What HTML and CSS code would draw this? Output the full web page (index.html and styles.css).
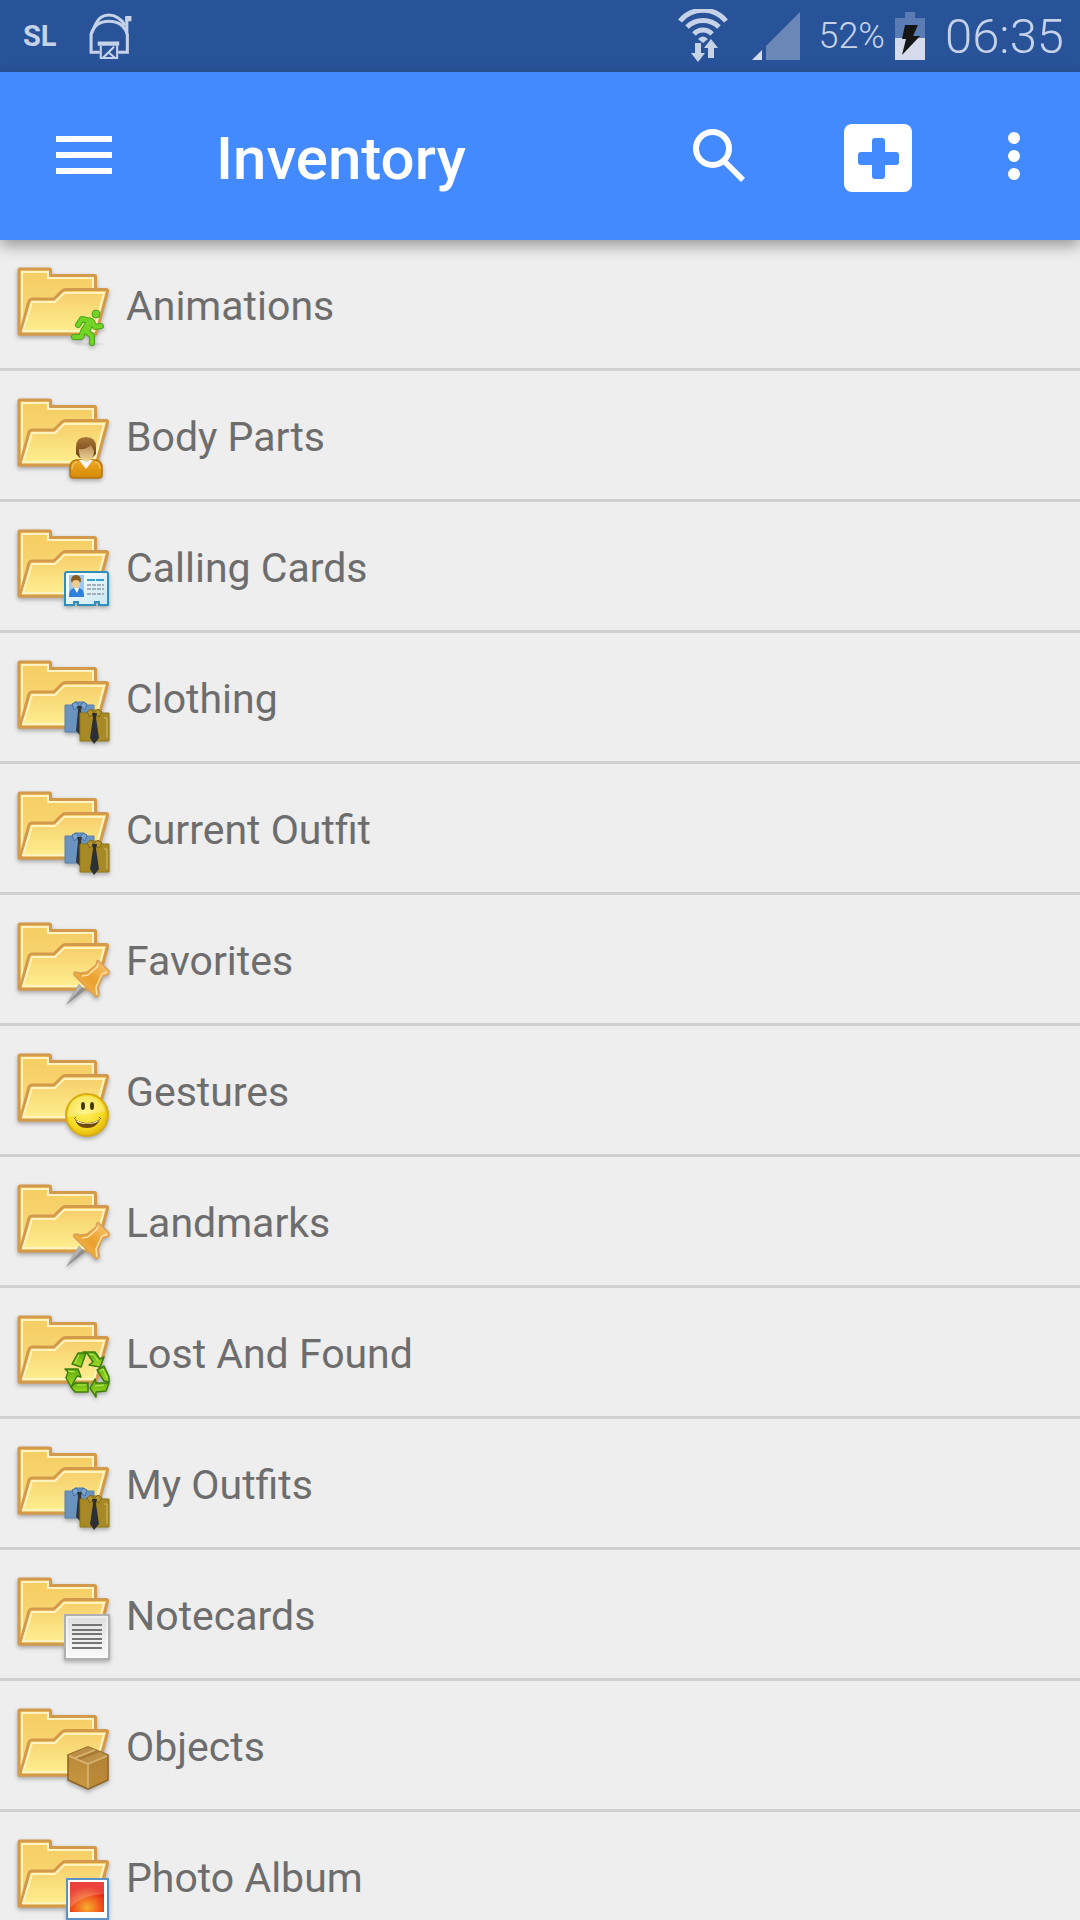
FILE: index.html
```
<!DOCTYPE html>
<html lang="en">
<head>
    <meta charset="UTF-8">
    <meta name="viewport" content="width=device-width, initial-scale=1.0">
    <title>Inventory</title>
    <link rel="stylesheet" href="styles.css">
</head>
<body>

    <!-- Shared icon shapes -->
    <svg class="sprite" aria-hidden="true">
        <defs>
            <linearGradient id="gBack" x1="0" y1="0" x2="0" y2="1">
                <stop offset="0" stop-color="#f5cd62"/><stop offset="1" stop-color="#fbdc7c"/>
            </linearGradient>
            <linearGradient id="gFront" x1="0" y1="0" x2="0" y2="1">
                <stop offset="0" stop-color="#f6cd68"/><stop offset="1" stop-color="#fff092"/>
            </linearGradient>
            <linearGradient id="gOrange" x1="0" y1="0" x2="0" y2="1">
                <stop offset="0" stop-color="#f0a822"/><stop offset="1" stop-color="#d38a08"/>
            </linearGradient>
            <linearGradient id="gHair" x1="0" y1="0" x2="0" y2="1">
                <stop offset="0" stop-color="#a87838"/><stop offset="1" stop-color="#6b3d12"/>
            </linearGradient>
            <linearGradient id="gFace" x1="0" y1="0" x2="0" y2="1">
                <stop offset="0" stop-color="#b98d55"/><stop offset="1" stop-color="#f2d9a0"/>
            </linearGradient>
            <linearGradient id="gCard" x1="0" y1="0" x2="1" y2="1">
                <stop offset="0" stop-color="#ffffff"/><stop offset="1" stop-color="#c8e8f4"/>
            </linearGradient>
            <linearGradient id="gPin" x1="0" y1="1" x2="1" y2="0">
                <stop offset="0" stop-color="#f8c25e"/><stop offset="0.5" stop-color="#e9a02c"/><stop offset="1" stop-color="#fbc873"/>
            </linearGradient>
            <linearGradient id="gGreen" x1="0" y1="0" x2="0" y2="1">
                <stop offset="0" stop-color="#5fae10"/><stop offset="1" stop-color="#a0dc22"/>
            </linearGradient>
            <linearGradient id="gPaper" x1="0" y1="0" x2="0" y2="1">
                <stop offset="0" stop-color="#dedede"/><stop offset="1" stop-color="#fafafa"/>
            </linearGradient>
            <linearGradient id="gBox" x1="0" y1="0" x2="0" y2="1">
                <stop offset="0" stop-color="#b98538"/><stop offset="1" stop-color="#c8993f"/>
            </linearGradient>
            <radialGradient id="gSmile" cx="0.45" cy="0.4" r="0.6">
                <stop offset="0" stop-color="#fff36b"/><stop offset="0.7" stop-color="#f6da22"/><stop offset="1" stop-color="#e3b60d"/>
            </radialGradient>
            <radialGradient id="gPhoto" cx="0.5" cy="0.85" r="0.7">
                <stop offset="0" stop-color="#f8b030"/><stop offset="0.6" stop-color="#f0501c"/><stop offset="1" stop-color="#e5140c"/>
            </radialGradient>
        </defs>

        <symbol id="folder" viewBox="0 0 96 96">
            <path d="M4 78V14q0-1 1-1h29.500q1 0 1 1v5.500h44q1 0 1 1V40L76 78z" fill="url(#gBack)" stroke="#d39a4c" stroke-width="3" stroke-linejoin="round"/>
            <path d="M7 74V16h26v6h45v10" fill="none" stroke="#fff3c4" stroke-width="2"/>
            <path d="M5 78L14 45q1-2 3-2h22l8-8q1.500-1.500 4-1.500h40q2 0 1.500 2L81 78z" fill="url(#gFront)" stroke="#d39a4c" stroke-width="3" stroke-linejoin="round"/>
            <path d="M8 75L17 46h23l9-9h40L79 75z" fill="none" stroke="#fff3c0" stroke-width="2"/>
        </symbol>

        <symbol id="runner" viewBox="0 0 96 96">
            <ellipse cx="74" cy="88" rx="14" ry="2" fill="#000" opacity="0.06"/>
            <g fill="none" stroke-linecap="round" stroke-linejoin="round">
                <g stroke="#46a51c" stroke-width="6">
                    <path d="M75 65l-8-2-4 6M77 66l3 5 6-1M70 74l7 6v7M69 73l-3 8h-7"/>
                    <path d="M75 66l-4 8" stroke-width="9"/>
                </g>
                <g stroke="#74d425" stroke-width="4">
                    <path d="M75 65l-8-2-4 6M77 66l3 5 6-1M70 74l7 6v7M69 73l-3 8h-7"/>
                    <path d="M75 66l-4 8" stroke-width="7"/>
                </g>
            </g>
            <circle cx="81" cy="58" r="4" fill="#74d425" stroke="#46a51c"/>
        </symbol>

        <symbol id="person" viewBox="0 0 96 96">
            <path d="M55 81q0-7 6-8h20q6 1 6 8v7q0 3-4 3H59q-4 0-4-3z" fill="url(#gOrange)" stroke="#b97408" stroke-width="1.500"/>
            <path d="M57 82q0-6 5-7M85 82q0-6-5-7" fill="none" stroke="#fad27c"/>
            <path d="M64 73h14l-7 9z" fill="#f7f7f7"/>
            <path d="M61 67V60q0-10 10-10t10 10v7l-4 4H65z" fill="url(#gHair)"/>
            <path d="M64 62q7 1 12-4l3 6q0 9-8 11-7-2-7-11z" fill="url(#gFace)"/>
        </symbol>

        <symbol id="card" viewBox="0 0 96 96">
            <path d="M50 56q0-2 2-2h39q2 0 2 2v31h-9v-3h-4v3H63v-3h-4v3h-9z" fill="url(#gCard)" stroke="#2f8fb8" stroke-width="2"/>
            <path d="M54 57h15v22H54z" fill="#9cc9f2"/>
            <path d="M54 78q0-7 5-8h5q5 1 5 8v1H54z" fill="#2f7fdd"/>
            <path d="M59 70h5l-2 5z" fill="#fff"/>
            <circle cx="61" cy="62" r="5" fill="#8a5a20"/>
            <circle cx="61" cy="66" r="4" fill="#eccb91"/>
            <path d="M72 62h17" stroke="#35a0c8" stroke-width="2" stroke-dasharray="8 1"/>
            <path d="M72 67h17M72 71h17M72 76h17" stroke="#8f9ba2" stroke-width="1.500" stroke-dasharray="4 1"/>
        </symbol>

        <symbol id="shirts" viewBox="0 0 96 96">
            <path d="M50 56h7l3-3h9l3 3h7v27H50z" fill="#6a93c0" stroke="#5680ad"/>
            <path d="M57 55l4-2 3 4-5 4zM72 55l-4-2-3 4 5 4z" fill="#7ba3d0" stroke="#47719f"/>
            <path d="M62 57h5l-1 4 3 21-4 4-4-4 2-21z" fill="#30353c"/>
            <path d="M65 64h7l3-3h9l3 3h7v28H65z" fill="#a78a25" stroke="#8e7620"/>
            <path d="M72 63l4-3 3 4-4 4zM87 63l-4-3-4 4 5 4z" fill="#b7962c" stroke="#7e6816"/>
            <path d="M89 69h3v20" fill="none" stroke="#d3bd6c"/>
            <path d="M77 64h5l-1 5 3 20-5 6-4-6 3-20z" fill="#2c2f33"/>
        </symbol>

        <symbol id="pin" viewBox="0 0 96 96">
            <path d="M64 73l6 6-19 15z" fill="#8e8e8e"/>
            <path d="M64 73l3 3-16 18z" fill="#b4b4b4"/>
            <path d="M82 50q1-1 2 0l10 10q1 3-2 4l-4 1-5 11q1 5 1 8-1 2-3 2L59 64q-1-3 2-3l4 1 7-1 9-7z" fill="url(#gPin)" stroke="#d9a05c" stroke-width="1.500" stroke-linejoin="round"/>
            <path d="M83 53l-1 3-9 8-6 1M92 61l-5 2-6 13 1 8" fill="none" stroke="#ffe0a5" stroke-width="1.500"/>
        </symbol>

        <symbol id="smile" viewBox="0 0 96 96">
            <circle cx="72" cy="73" r="21" fill="url(#gSmile)" stroke="#d6ac14" stroke-width="2"/>
            <path d="M53 75q-1-20 19-21 15 1 18 16-18 1-37 5z" fill="#fff" opacity="0.25"/>
            <ellipse cx="68" cy="64" rx="2" ry="4" fill="#45360a"/>
            <ellipse cx="77" cy="64" rx="2" ry="4" fill="#45360a"/>
            <path d="M60 77q12 8 25 0-3 9-13 9t-12-9z" fill="#6f4a0c"/>
            <path d="M61 78q11 7 23 0-2 4-12 4t-11-4z" fill="#fffbe0"/>
            <path d="M59 77l2-2M84 75l2 2" stroke="#8a6408"/>
        </symbol>

        <symbol id="recycle" viewBox="0 0 96 96">
            <g fill="url(#gGreen)" stroke="#3d7d0b" stroke-width="1.500" stroke-linejoin="round">
                <path d="M63 49h8l-5 14-9-3z"/>
                <path d="M68 48h12l5 7 4-2-4 10-11-2 4-3-6-9z"/>
                <path d="M82 66l7-4 5 11v5l-5-1z"/>
                <path d="M94 79l-3 8-10 1v5l-6-9 5-9 1 4z"/>
                <path d="M50 65h13l3 8-4-1-6 11-5-9 2-6z"/>
                <path d="M60 79h13v9H60l-4-5z"/>
            </g>
            <path d="M64 51l-4 8M74 50l5 1 4 6M85 67l3-2 4 9M53 67l7 1M62 81h9M80 82l9-1" fill="none" stroke="#c6ec60"/>
        </symbol>

        <symbol id="note" viewBox="0 0 96 96">
            <path d="M50 49h44v44H50z" fill="url(#gPaper)" stroke="#b0b0b0" stroke-width="2"/>
            <path d="M52 51h40v40H52z" fill="none" stroke="#fff"/>
            <path d="M57 59h30M57 64h30M57 68h30M57 73h30M57 77h30M57 82h30" stroke="#747474" stroke-width="2"/>
        </symbol>

        <symbol id="box" viewBox="0 0 96 96">
            <path d="M73 50l20 8v25l-20 9-20-9V58z" fill="url(#gBox)" stroke="#8c6222" stroke-width="1.500" stroke-linejoin="round"/>
            <path d="M73 50l20 8-20 9-20-9z" fill="#bd9048"/>
            <path d="M60 61l20-8 5 2-20 8z" fill="#a87b35"/>
            <path d="M73 67l20-9v25l-20 9z" fill="#a57531" opacity="0.35"/>
            <path d="M54 59l19 8 19-8M73 67v24M60 61l20-8" fill="none" stroke="#d9b876" stroke-width="1.500"/>
        </symbol>

        <symbol id="photo" viewBox="0 0 96 96">
            <path d="M52 51h41v40H52z" fill="#fff" stroke="#5b93c7" stroke-width="2"/>
            <path d="M55 54h34v30H55z" fill="url(#gPhoto)"/>
            <path d="M55 54h34v12q-22 1-34 14z" fill="#fff" opacity="0.2"/>
        </symbol>
    </svg>

    <div class="status-bar">
        <span class="carrier">SL</span>
        <svg class="mail-icon" viewBox="0 0 42 46" aria-hidden="true">
            <g fill="none" stroke="#c6d2e8" stroke-width="3">
                <path d="M10 38.500H1.500V21L6 11Q10 2 19 2t16 10"/>
                <path d="M1.500 21Q5 8 19 8t18 13v17.500h-9M36.500 21V4"/>
                <path d="M11 32v12h16V32M24 33L13 44M18 38l7 6" stroke-width="2"/>
            </g>
            <path d="M35 3h6v5h-6zM8 28h21v4H8z" fill="#c6d2e8"/>
        </svg>
        <svg class="wifi-icon" viewBox="0 0 50 54" role="img" aria-label="Wi-Fi">
            <g fill="none" stroke="#c6d2e8" stroke-width="5">
                <path d="M2 12a30 30 0 0 1 46 0M9 18a23 23 0 0 1 32 0M16 25a12 12 0 0 1 18 0"/>
            </g>
            <path d="M20 30q5-5 10 0l-5 4zM17 34h6v10h4l-7 9-7-9h4zM33 30l7 9h-4v10h-6V39h-4z" fill="#c6d2e8"/>
        </svg>
        <svg class="signal-icon" viewBox="0 0 48 48" role="img" aria-label="Signal">
            <path d="M14 34L48 0v48H14z" fill="#6a87b8"/>
            <path d="M0 48h10V38z" fill="#d5dcea"/>
        </svg>
        <span class="battery-level">52%</span>
        <svg class="battery-icon" viewBox="0 0 30 48" role="img" aria-label="Charging">
            <path d="M10 0h10v6h10v20H0V6h10z" fill="#5b7bb4"/>
            <path d="M0 26h30v22H0z" fill="#d5dbeb"/>
            <path d="M10 13h13l-5 11h7L7 43l4-16H7z" fill="#151515"/>
        </svg>
        <span class="clock">06:35</span>
    </div>

    <header class="toolbar">
        <button class="nav-btn" aria-label="Open menu">
            <svg viewBox="0 0 72 72"><path d="M8 16h56v6H8zM8 32h56v6H8zM8 48h56v6H8z" fill="#fff"/></svg>
        </button>
        <h1>Inventory</h1>
        <button class="search-btn" aria-label="Search">
            <svg viewBox="0 0 72 72">
                <circle cx="29.500" cy="28.500" r="16.500" fill="none" stroke="#fff" stroke-width="6"/>
                <path d="M42 39l3 2 17 17-4 4-17-17-2-3z" fill="#fff"/>
            </svg>
        </button>
        <button class="add-btn" aria-label="Add">
            <svg viewBox="0 0 72 72">
                <rect x="2" y="4" width="68" height="68" rx="8" fill="#fff"/>
                <rect x="16" y="32" width="41" height="13" rx="3" fill="#448aff"/>
                <rect x="30" y="18" width="13" height="41" rx="3" fill="#448aff"/>
            </svg>
        </button>
        <button class="more-btn" aria-label="More options">
            <svg viewBox="0 0 72 72" fill="#fff"><circle cx="36" cy="18" r="6"/><circle cx="36" cy="36" r="6"/><circle cx="36" cy="54" r="6"/></svg>
        </button>
    </header>

    <main>
        <ul class="folder-list">
            <li><a href="#"><svg viewBox="0 0 96 96"><use href="#folder"/><use href="#runner"/></svg><span>Animations</span></a></li>
            <li><a href="#"><svg viewBox="0 0 96 96"><use href="#folder"/><use href="#person"/></svg><span>Body Parts</span></a></li>
            <li><a href="#"><svg viewBox="0 0 96 96"><use href="#folder"/><use href="#card"/></svg><span>Calling Cards</span></a></li>
            <li><a href="#"><svg viewBox="0 0 96 96"><use href="#folder"/><use href="#shirts"/></svg><span>Clothing</span></a></li>
            <li><a href="#"><svg viewBox="0 0 96 96"><use href="#folder"/><use href="#shirts"/></svg><span>Current Outfit</span></a></li>
            <li><a href="#"><svg viewBox="0 0 96 96"><use href="#folder"/><use href="#pin"/></svg><span>Favorites</span></a></li>
            <li><a href="#"><svg viewBox="0 0 96 96"><use href="#folder"/><use href="#smile"/></svg><span>Gestures</span></a></li>
            <li><a href="#"><svg viewBox="0 0 96 96"><use href="#folder"/><use href="#pin"/></svg><span>Landmarks</span></a></li>
            <li><a href="#"><svg viewBox="0 0 96 96"><use href="#folder"/><use href="#recycle"/></svg><span>Lost And Found</span></a></li>
            <li><a href="#"><svg viewBox="0 0 96 96"><use href="#folder"/><use href="#shirts"/></svg><span>My Outfits</span></a></li>
            <li><a href="#"><svg viewBox="0 0 96 96"><use href="#folder"/><use href="#note"/></svg><span>Notecards</span></a></li>
            <li><a href="#"><svg viewBox="0 0 96 96"><use href="#folder"/><use href="#box"/></svg><span>Objects</span></a></li>
            <li><a href="#"><svg viewBox="0 0 96 96"><use href="#folder"/><use href="#photo"/></svg><span>Photo Album</span></a></li>
        </ul>
    </main>

</body>
</html>
```

FILE: styles.css
```
* {
    margin: 0;
    padding: 0;
    box-sizing: border-box;
}

body {
    font-family: Roboto, "Noto Sans", sans-serif;
    background: #eeeeee;
    display: flex;
    flex-direction: column;
    height: 100vh;
    overflow: hidden;
}

svg {
    display: block;
    flex-shrink: 0;
}

.sprite {
    width: 0;
    height: 0;
    position: absolute;
}

.status-bar {
    display: flex;
    align-items: center;
    flex-shrink: 0;
    min-height: 72px;
    padding: 0 16px 0 23px;
    background: #295399;
    color: #c6d2e8;
}

.carrier {
    font-size: 29px;
    font-weight: bold;
}

.mail-icon {
    width: 44px;
    height: 47px;
    margin-left: 32px;
}

.wifi-icon {
    width: 50px;
    height: 54px;
    margin-left: auto;
}

.signal-icon {
    width: 48px;
    height: 48px;
    margin: 0 18px 0 24px;
}

.battery-level {
    font-size: 36px;
    font-weight: 300;
}

.battery-icon {
    width: 30px;
    height: 48px;
    margin: 0 20px 0 10px;
}

.clock {
    font-size: 49px;
    font-weight: 300;
}

.toolbar {
    display: flex;
    align-items: center;
    flex-shrink: 0;
    min-height: 168px;
    padding-right: 8px;
    background: #448aff;
    color: #ffffff;
    box-shadow: 0 6px 14px rgba(0, 0, 0, 0.35);
    z-index: 1;
}

.toolbar h1 {
    flex: 1;
    padding: 4px 0 0 48px;
    font-size: 60px;
    font-weight: 500;
}

.toolbar button {
    display: flex;
    align-items: center;
    justify-content: center;
    height: 144px;
    background: none;
    border: none;
    cursor: pointer;
}

.toolbar svg {
    width: 72px;
    height: 72px;
}

.toolbar .nav-btn {
    width: 168px;
}

.search-btn {
    width: 162px;
}

.add-btn {
    width: 156px;
}

.more-btn {
    width: 116px;
}

main {
    flex: 1;
    min-height: 0;
    overflow-y: auto;
    scrollbar-width: none;
}

.folder-list {
    list-style: none;
}

.folder-list li {
    border-bottom: 3px solid #d0d0d0;
}

.folder-list a {
    display: flex;
    align-items: center;
    gap: 15px;
    padding: 16px 15px;
    font-size: 41px;
    color: #6d6d6d;
    text-decoration: none;
}

.folder-list span {
    padding-top: 4px;
}

.folder-list svg {
    width: 96px;
    height: 96px;
    filter: drop-shadow(0 2px 2px rgba(0, 0, 0, 0.3));
}
```
